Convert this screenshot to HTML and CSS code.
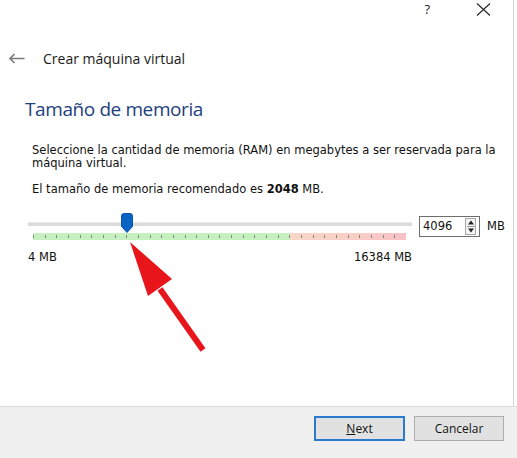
FILE: index.html
```html
<!DOCTYPE html>
<html lang="es">
<head>
  <meta charset="UTF-8">
  <title>Crear máquina virtual</title>
  <link rel="stylesheet" href="styles.css">
</head>
<body>
  <div class="window">
    <div class="main">
      <div class="titlebar">
        <span class="help">?</span>
        <svg class="close" width="15" height="13" viewBox="0 0 15 13">
          <path d="M1 0.5 L14 12.5 M14 0.5 L1 12.5" stroke="#222" stroke-width="1.1" fill="none"/>
        </svg>
      </div>

      <div class="header">
        <svg class="back" width="17" height="11" viewBox="0 0 17 11">
          <path d="M16.5 5.5 H2 M6.5 1 L2 5.5 L6.5 10" stroke="#7a7a7a" stroke-width="1.6" fill="none"/>
        </svg>
        <span>Crear máquina virtual</span>
      </div>

      <h1 class="page-title">Tamaño de memoria</h1>

      <div class="content">
        <p class="first">Seleccione la cantidad de memoria (RAM) en megabytes a ser reservada para la máquina virtual.</p>
        <p>El tamaño de memoria recomendado es <b>2048</b> MB.</p>

        <div class="memory-row">
          <div class="slider">
            <div class="track">
              <div class="groove"></div>
              <svg class="thumb" width="12" height="20" viewBox="0 0 12 20">
                <path d="M0.5 3 Q0.5 0.5 3 0.5 H9 Q11.5 0.5 11.5 3 V13.5 L6 19.5 L0.5 13.5 Z" fill="#0a64c4" stroke="#0a55a8" stroke-width="1"/>
              </svg>
            </div>
            <div class="ticks"></div>
            <div class="scale">
              <span>4 MB</span>
              <span>16384 MB</span>
            </div>
          </div>

          <div class="spin">
            <span class="spin-value">4096</span>
            <span class="spin-buttons">
              <svg width="8" height="15" viewBox="0 0 8 15">
                <path d="M4 1.5 L7 5.5 H1 Z M4 13.5 L7 9.5 H1 Z" fill="#222"/>
                <path d="M0 7.5 H8" stroke="#9a9a9a" stroke-width="1"/>
              </svg>
            </span>
          </div>
          <span class="unit">MB</span>
        </div>
      </div>
    </div>

    <div class="footer">
      <button class="btn default"><u>N</u>ext</button>
      <button class="btn">Cancelar</button>
    </div>

    <svg class="pointer" width="517" height="458" viewBox="0 0 517 458">
      <path d="M203 350 L160 289" stroke="#e8151b" stroke-width="6" fill="none"/>
      <path d="M130 242 L148 296 L172 279 Z" fill="#e8151b"/>
    </svg>
  </div>
</body>
</html>
```

FILE: styles.css
```css
body {
  margin: 0;
  background: #fff;
  font-family: "DejaVu Sans", Tahoma, sans-serif;
}

.window {
  position: relative;
  width: 517px;
  height: 458px;
  display: flex;
  flex-direction: column;
  overflow: hidden;
}

.main {
  flex: 1;
  width: 513px;
  border-right: 1px solid #d6d6d6;
}

.titlebar {
  height: 22px;
  display: flex;
  align-items: flex-start;
  justify-content: flex-end;
  padding-right: 22px;
}

.help {
  font-family: "Open Sans", sans-serif;
  font-size: 13px;
  line-height: 16px;
  color: #222;
  margin-right: 46px;
  margin-top: 1px;
}

.close {
  margin-top: 3px;
}

.header {
  display: flex;
  align-items: center;
  height: 20px;
  margin-top: 26px;
  padding-left: 8px;
  font-family: "Open Sans", sans-serif;
  font-size: 14px;
  color: #1a1a1a;
}

.back {
  margin-right: 18px;
}

.page-title {
  margin: 27px 0 0 25px;
  font-family: "Open Sans", sans-serif;
  font-weight: normal;
  font-size: 19px;
  letter-spacing: -0.4px;
  line-height: 28px;
  color: #1d3f7e;
}

.content {
  padding-left: 28px;
  font-size: 11.5px;
  line-height: 13px;
  color: #111;
}

.content p {
  margin: 13px 0 0 4px;
  width: 478px;
}

.content p.first {
  margin-top: 21px;
}

.memory-row {
  display: flex;
  align-items: flex-start;
  margin-top: 17px;
}

.slider {
  width: 384px;
}

.track {
  position: relative;
  height: 20px;
}

.groove {
  position: absolute;
  left: 0;
  right: 0;
  top: 9px;
  height: 4px;
  background: #dcdcdc;
  border-top: 1px solid #e8e8e8;
  box-sizing: border-box;
}

.thumb {
  position: absolute;
  left: 93px;
  top: 0;
}

.ticks {
  height: 7px;
  margin: 0 6px 0 5px;
  background:
    repeating-linear-gradient(to right, #7c8a7c 0 1px, transparent 1px 11.656px) 0 2px / 100% 3px no-repeat,
    linear-gradient(to right, #c6f0c0 0, #c6f0c0 69%, #fbd6c8 69%, #f9cfc6 85%, #f7c0c6 100%);
}

.scale {
  display: flex;
  justify-content: space-between;
  margin-top: 11px;
}

.spin {
  display: flex;
  align-items: center;
  justify-content: space-between;
  box-sizing: border-box;
  width: 61px;
  height: 21px;
  margin: 3px 0 0 7px;
  padding: 0 3px 0 3px;
  border: 1px solid #6e6e6e;
  background: #fff;
}

.spin-buttons {
  display: flex;
  align-items: center;
  justify-content: center;
  box-sizing: border-box;
  width: 11px;
  height: 17px;
  border: 1px solid #a8a8a8;
  background: #f4f4f4;
}

.unit {
  margin: 7px 0 0 7px;
}

.footer {
  height: 42px;
  border-top: 1px solid #dcdcdc;
  background: #f0f0f0;
  display: flex;
  justify-content: flex-end;
  align-items: flex-start;
  gap: 9px;
  padding: 9px 13px 0 0;
}

.btn {
  box-sizing: border-box;
  width: 90px;
  height: 25px;
  border: 1px solid #adadad;
  background: #e1e1e1;
  font-family: "Open Sans", sans-serif;
  font-size: 12px;
  color: #111;
  padding: 0;
}

.btn.default {
  width: 91px;
  border: 2px solid #2a7ad0;
}

.pointer {
  position: absolute;
  left: 0;
  top: 0;
  pointer-events: none;
}
```
